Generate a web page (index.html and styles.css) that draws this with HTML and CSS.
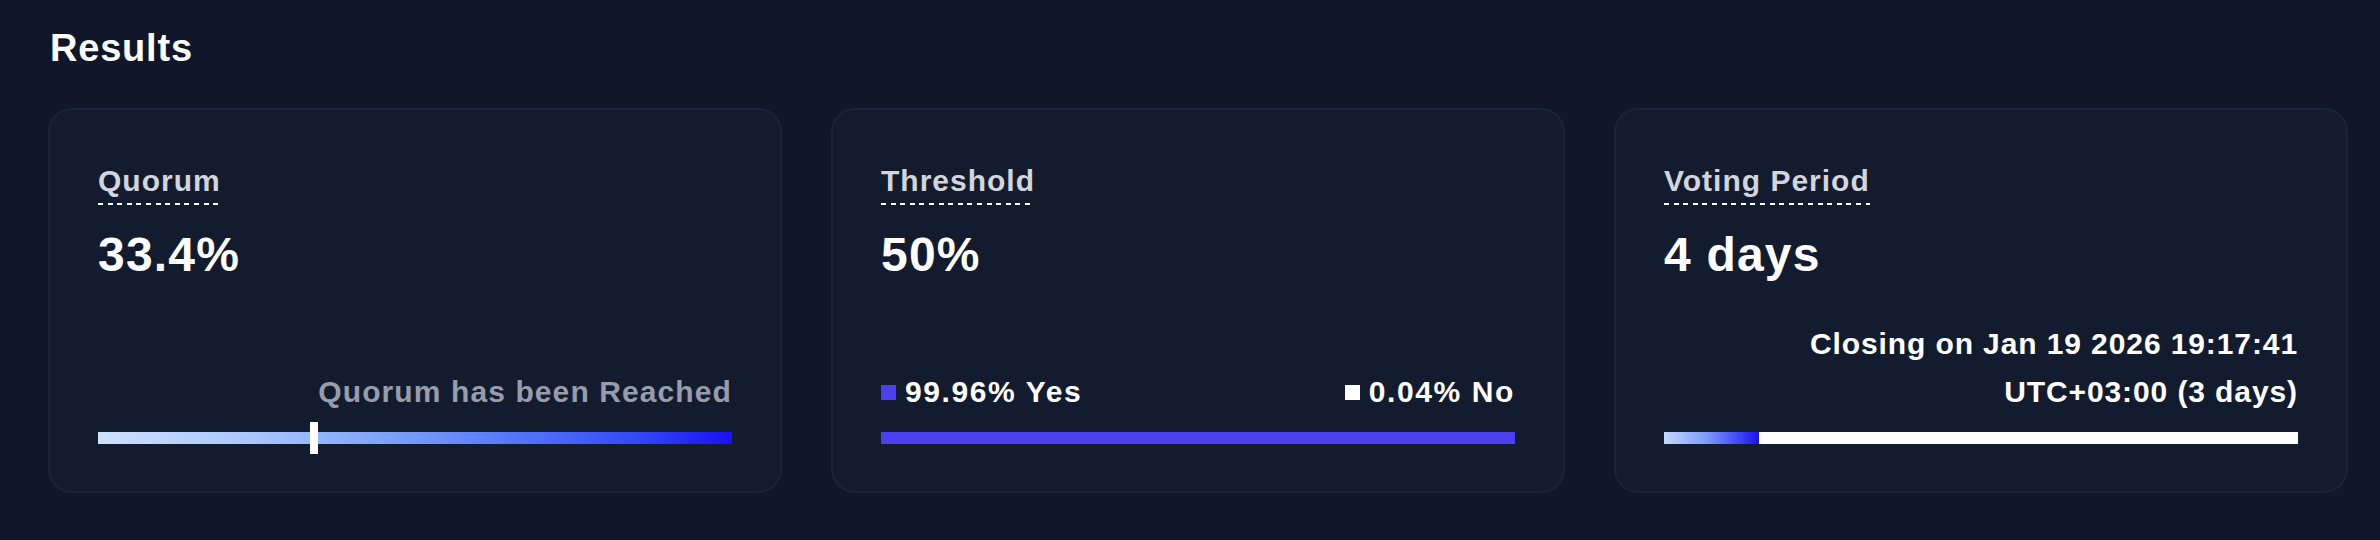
FILE: index.html
```html
<!DOCTYPE html>
<html lang="en">
<head>
<meta charset="utf-8">
<title>Results</title>
<link rel="stylesheet" href="styles.css">
</head>
<body>
<main class="page">
  <h2 class="title">Results</h2>
  <div class="cards">
    <section class="card">
      <div class="label">Quorum</div>
      <div class="value">33.4%</div>
      <div class="bottom">
        <div class="row row-end muted">Quorum has been Reached</div>
        <div class="bar bar-quorum">
          <span class="marker" style="left: 33.4%"></span>
        </div>
      </div>
    </section>
    <section class="card">
      <div class="label">Threshold</div>
      <div class="value">50%</div>
      <div class="bottom">
        <div class="row row-between">
          <span class="legend"><i class="swatch swatch-yes"></i>99.96% Yes</span>
          <span class="legend"><i class="swatch swatch-no"></i>0.04% No</span>
        </div>
        <div class="bar bar-threshold">
          <span class="fill fill-yes" style="width: 99.96%"></span>
        </div>
      </div>
    </section>
    <section class="card">
      <div class="label">Voting Period</div>
      <div class="value">4 days</div>
      <div class="bottom">
        <div class="row row-end closing">Closing on Jan 19 2026 19:17:41<br>UTC+03:00 (3 days)</div>
        <div class="bar bar-period">
          <span class="fill fill-period" style="width: 15%"></span>
        </div>
      </div>
    </section>
  </div>
</main>
</body>
</html>
```

FILE: styles.css
```css
html, body {
  margin: 0;
  padding: 0;
  background: #0f1729;
}

body {
  font-family: "Liberation Sans", Arial, sans-serif;
  color: #ffffff;
}

.page {
  padding: 25px 32px 0 48px;
}

.title {
  margin: 0 0 37px 2px;
  font-size: 38px;
  line-height: 46px;
  font-weight: 700;
  letter-spacing: 0.8px;
  color: #ffffff;
}

.cards {
  display: grid;
  grid-template-columns: repeat(3, 1fr);
  gap: 49px;
}

.card {
  box-sizing: border-box;
  height: 385px;
  display: flex;
  flex-direction: column;
  align-items: stretch;
  padding: 53px 48px 47px;
  background: #131c2e;
  border: 2px solid #1a2437;
  border-radius: 24px;
}

.label {
  align-self: flex-start;
  font-size: 30px;
  line-height: 36px;
  font-weight: 700;
  letter-spacing: 1px;
  color: #d2d5dd;
  padding-bottom: 6px;
  background-image: repeating-linear-gradient(to right, #ffffff 0 5px, transparent 5px 9.6px);
  background-size: 100% 2px;
  background-repeat: no-repeat;
  background-position: left bottom;
  margin-bottom: 21px;
}

.value {
  font-size: 48px;
  line-height: 58px;
  font-weight: 700;
  letter-spacing: 1.2px;
  color: #ffffff;
}

.bottom {
  margin-top: auto;
  display: flex;
  flex-direction: column;
}

.row {
  font-size: 30px;
  line-height: 48px;
  font-weight: 700;
  letter-spacing: 0.9px;
  margin-bottom: 16px;
  display: flex;
}

.row-end {
  justify-content: flex-end;
  text-align: right;
}

.row-between {
  justify-content: space-between;
  align-items: center;
  letter-spacing: 1.6px;
}

.muted {
  color: #969cab;
  letter-spacing: 1.1px;
}

.closing {
  display: block;
  color: #ffffff;
}

.legend {
  display: flex;
  align-items: center;
  color: #ffffff;
}

.swatch {
  display: inline-block;
  width: 15px;
  height: 15px;
  margin-right: 9px;
}

.swatch-yes {
  background: #4c3ef1;
}

.swatch-no {
  background: #ffffff;
}

.bar {
  position: relative;
  height: 12px;
  display: flex;
}

.bar-quorum {
  background: linear-gradient(to right, #cde0fe 0%, #a9c5fd 25%, #7fa3fc 45%, #5579fb 65%, #3448f8 85%, #1a0ff2 100%);
}

.marker {
  position: absolute;
  top: -10px;
  width: 8px;
  height: 32px;
  background: #ffffff;
}

.bar-threshold {
  background: #ffffff;
}

.fill {
  display: block;
  height: 100%;
}

.fill-yes {
  background: #4c3ef1;
}

.bar-period {
  background: #ffffff;
}

.fill-period {
  background: linear-gradient(to right, #c6d9fd 0%, #7d9bfb 45%, #1a0ff2 100%);
}
```
